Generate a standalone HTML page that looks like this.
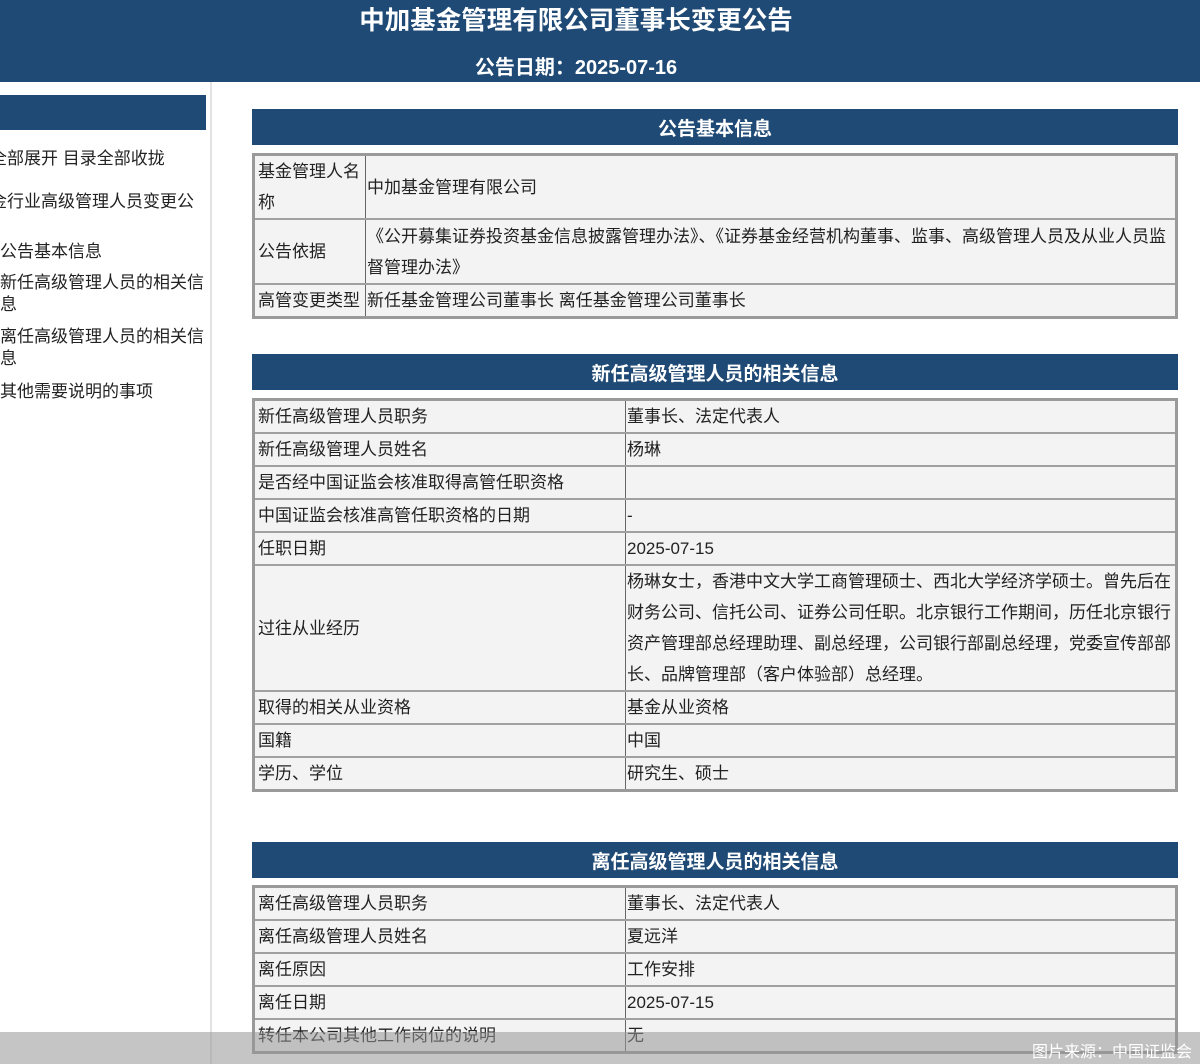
<!DOCTYPE html>
<html><head><meta charset="utf-8">
<style>
*{margin:0;padding:0;box-sizing:border-box}
html,body{width:1200px;height:1064px;overflow:hidden}
body{background:#fff;font-family:"Liberation Sans","Noto Sans CJK SC",sans-serif;color:#222;position:relative}
.hdr{position:absolute;left:0;top:0;width:1200px;height:82px;background:#1f4a75;color:#fff;text-align:center;font-weight:bold}
.hdr .t{position:absolute;left:0;width:1152px;top:0px;font-size:25.5px}
.hdr .d{position:absolute;left:0;width:1152px;top:51px;font-size:20px}
.side{position:absolute;left:0;top:82px;width:212px;height:982px;border-right:2px solid #e2e2e2}
.sbar{position:absolute;left:0;top:13px;width:206px;height:35px;background:#1f4a75}
.si{position:absolute;left:0;font-size:17px;line-height:22px;width:210px;white-space:nowrap}
.bar{position:absolute;left:252px;width:926px;height:36px;background:#1f4a75;color:#fff;font-weight:bold;font-size:19px;text-align:center;line-height:42px}
table{position:absolute;left:252px;width:926px;border-collapse:collapse;border:3px solid #9a9a9a;font-size:17px;table-layout:fixed}
td{background:#f3f3f3;border-top:2px solid #a0a0a0;border-bottom:2px solid #a0a0a0;padding:0 0 0 3px;vertical-align:middle;line-height:31px}
td.k{border-right:1px solid #666}
td.v{padding-left:1px}
.foot{position:absolute;left:0;top:1032px;width:1200px;height:32px;background:rgba(150,150,150,0.55)}
.src{position:absolute;right:8px;top:1038px;color:#fff;font-size:16px}
</style></head><body>
<div class="hdr"><div class="t">中加基金管理有限公司董事长变更公告</div><div class="d">公告日期：2025-07-16</div></div>
<div class="side">
<div class="sbar"></div>
<div class="si" style="top:66px;left:-10px">全部展开 目录全部收拢</div>
<div class="si" style="top:109px;left:-10px">金行业高级管理人员变更公</div>
<div class="si" style="top:159px">公告基本信息</div>
<div class="si" style="top:190px">新任高级管理人员的相关信<br>息</div>
<div class="si" style="top:244px">离任高级管理人员的相关信<br>息</div>
<div class="si" style="top:299px">其他需要说明的事项</div>
</div>

<div class="bar" style="top:109px">公告基本信息</div>
<table style="top:153px">
<col style="width:112px"><col>
<tr style="height:64px"><td class="k">基金管理人名称</td><td class="v">中加基金管理有限公司</td></tr>
<tr style="height:65px"><td class="k">公告依据</td><td class="v">《公开募集证券投资基金信息披露管理办法》、《证券基金经营机构董事、监事、高级管理人员及从业人员监督管理办法》</td></tr>
<tr style="height:33px"><td class="k">高管变更类型</td><td class="v">新任基金管理公司董事长 离任基金管理公司董事长</td></tr>
</table>

<div class="bar" style="top:354px">新任高级管理人员的相关信息</div>
<table style="top:398px">
<col style="width:372px"><col>
<tr style="height:33px"><td class="k">新任高级管理人员职务</td><td class="v">董事长、法定代表人</td></tr>
<tr style="height:33px"><td class="k">新任高级管理人员姓名</td><td class="v">杨琳</td></tr>
<tr style="height:33px"><td class="k">是否经中国证监会核准取得高管任职资格</td><td class="v"></td></tr>
<tr style="height:33px"><td class="k">中国证监会核准高管任职资格的日期</td><td class="v">-</td></tr>
<tr style="height:33px"><td class="k">任职日期</td><td class="v">2025-07-15</td></tr>
<tr style="height:126px"><td class="k">过往从业经历</td><td class="v">杨琳女士，香港中文大学工商管理硕士、西北大学经济学硕士。曾先后在财务公司、信托公司、证券公司任职。北京银行工作期间，历任北京银行资产管理部总经理助理、副总经理，公司银行部副总经理，党委宣传部部长、品牌管理部（客户体验部）总经理。</td></tr>
<tr style="height:33px"><td class="k">取得的相关从业资格</td><td class="v">基金从业资格</td></tr>
<tr style="height:33px"><td class="k">国籍</td><td class="v">中国</td></tr>
<tr style="height:33px"><td class="k">学历、学位</td><td class="v">研究生、硕士</td></tr>
</table>

<div class="bar" style="top:842px">离任高级管理人员的相关信息</div>
<table style="top:885px">
<col style="width:372px"><col>
<tr style="height:33px"><td class="k">离任高级管理人员职务</td><td class="v">董事长、法定代表人</td></tr>
<tr style="height:33px"><td class="k">离任高级管理人员姓名</td><td class="v">夏远洋</td></tr>
<tr style="height:33px"><td class="k">离任原因</td><td class="v">工作安排</td></tr>
<tr style="height:33px"><td class="k">离任日期</td><td class="v">2025-07-15</td></tr>
<tr style="height:33px"><td class="k">转任本公司其他工作岗位的说明</td><td class="v">无</td></tr>
</table>
<div class="foot"></div>
<div class="src">图片来源：中国证监会</div>
</body></html>
